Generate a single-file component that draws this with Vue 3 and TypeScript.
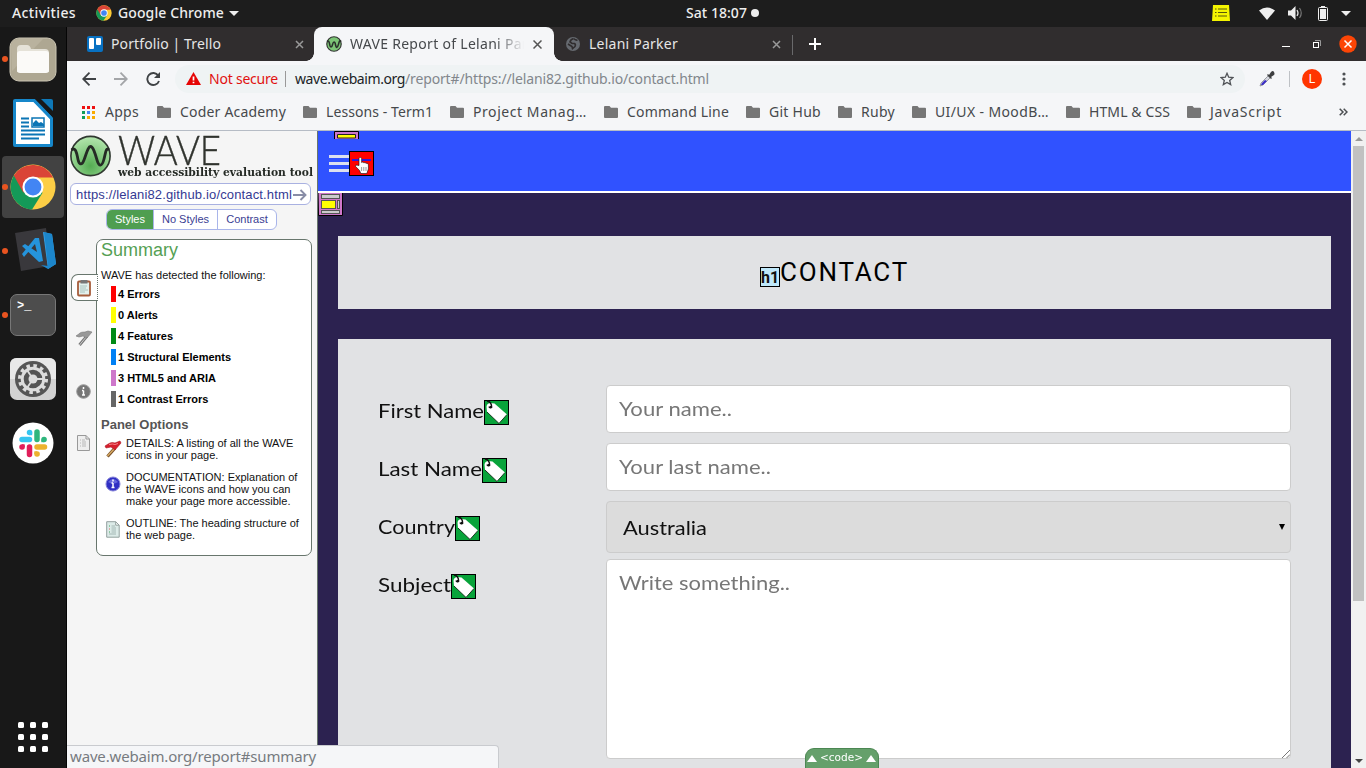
<script setup lang="ts">
import type { Directive } from 'vue'

interface Fit {
  w: number
  stretch?: boolean
}

// Gives a line of text an exact width, by letter spacing or by horizontal stretch.
const vFit: Directive<HTMLElement, number | Fit> = {
  mounted(el, binding) {
    const fit: Fit = typeof binding.value === 'number' ? { w: binding.value } : binding.value
    const natural = el.getBoundingClientRect().width
    const count = (el.textContent ?? '').length
    if (fit.stretch) {
      el.style.transformOrigin = 'left center'
      el.style.transform = `scaleX(${fit.w / natural})`
    } else {
      el.style.letterSpacing = `${(fit.w - natural) / count}px`
    }
    el.style.width = `${fit.w}px`
  },
}

const bookmarks = [
  { name: 'Coder Academy', w: 106 },
  { name: 'Lessons - Term1', w: 107 },
  { name: 'Project Manag…', w: 114 },
  { name: 'Command Line', w: 102 },
  { name: 'Git Hub', w: 52 },
  { name: 'Ruby', w: 34 },
  { name: 'UI/UX - MoodB…', w: 114 },
  { name: 'HTML & CSS', w: 81 },
  { name: 'JavaScript', w: 72 },
]

const counts = [
  { text: '4 Errors', kind: 'error' },
  { text: '0 Alerts', kind: 'alert' },
  { text: '4 Features', kind: 'feature' },
  { text: '1 Structural Elements', kind: 'structure' },
  { text: '3 HTML5 and ARIA', kind: 'aria' },
  { text: '1 Contrast Errors', kind: 'contrast' },
]

const fields = [
  { label: 'First Name', w: 106, type: 'text', value: 'Your name..', vw: 113 },
  { label: 'Last Name', w: 104, type: 'text', value: 'Your last name..', vw: 152 },
  { label: 'Country', w: 77, type: 'select', value: 'Australia', vw: 84 },
  { label: 'Subject', w: 73, type: 'area', value: 'Write something..', vw: 171 },
]
const appColors = ['#e11', '#e11', '#e11', '#0f9d58', '#4285f4', '#f9ab00', '#0f9d58', '#f9ab00', '#f9ab00']
</script>

<template>
  <div class="desktop">
    <header class="topbar">
      <span class="activities"><span v-fit="64" class="t">Activities</span></span>
      <svg class="chrome-small" width="16" height="16" viewBox="0 0 48 48">
        <circle cx="24" cy="24" r="23" fill="#fbc934" />
        <path d="M24 24L4 12.500A23 23 0 0 0 22 47L34 30z" fill="#149958" />
        <path d="M4 12.500A23 23 0 0 1 44.500 14H24L14 30z" fill="#da4437" />
        <circle cx="24" cy="24" r="11" fill="#fff" /><circle cx="24" cy="24" r="8.500" fill="#4285f4" />
      </svg>
      <span v-fit="106" class="t">Google Chrome</span>
      <i class="caret app-caret"></i>
      <span class="clock"><span v-fit="61" class="t">Sat 18:07</span><i class="dot"></i></span>
      <span class="tray">
        <svg class="note" width="18" height="16" viewBox="0 0 18 16">
          <path d="M1 0h16l1 16H0z" fill="#f4f400" />
          <path d="M3 4h1.500M3 7.500h1.500M3 11h1.500M6 4h9M6 7.500h9M6 11h9" stroke="#56560c" stroke-width="1.200" />
        </svg>
        <svg class="wifi" width="16" height="13" viewBox="0 0 16 13"><path d="M0 3.500Q8-2.500 16 3.500L8 13z" fill="#eee" /></svg>
        <svg class="vol" width="16" height="14" viewBox="0 0 16 14">
          <path d="M0 4.500h3L7.500 0v14L3 9.500H0z" fill="#eee" />
          <path d="M9 4q2 3 0 6" fill="none" stroke="#ddd" stroke-width="1.300" /><path d="M11.500 2q3.500 5 0 10" fill="none" stroke="#777" stroke-width="1.200" />
        </svg>
        <svg class="battery" width="10" height="15" viewBox="0 0 10 15">
          <path d="M3 0h4v2H3z" fill="#eee" /><rect x=".5" y="1.500" width="9" height="13" rx="1" fill="none" stroke="#eee" /><path d="M2 3h6v10H2z" fill="#eee" />
        </svg>
        <i class="caret"></i>
      </span>
    </header>

    <div class="body">
      <nav class="dock">
        <div class="slot running">
          <svg width="48" height="46" viewBox="0 0 48 46">
            <rect x="1" y="2" width="46" height="43" rx="9" fill="#aea792" stroke="#cbc5b3" />
            <path d="M3 35L34 3H10Q2 3 2 11z" fill="#b9b29e" />
            <path d="M8 36V13q0-4 4-4h6q3 0 4 4h14q4 0 4 4v19z" fill="#e5e2d8" />
            <rect x="8" y="15" width="32" height="22" rx="3" fill="#fbfaf8" />
          </svg>
        </div>
        <div class="slot">
          <svg width="40" height="48" viewBox="0 0 40 48">
            <path d="M2 0h20l18 17v29q0 2-2 2H2q-2 0-2-2V2q0-2 2-2z" fill="#1687ca" />
            <path d="M3 3h18l16 17v25H3z" fill="#fff" />
            <path d="M22 0h7l11 12v7z" fill="#181818" /><path d="M28 0h10q2 0 2 2v10z" fill="#0e78b7" />
            <path d="M21 1.500l17.500 18" stroke="#1687ca" stroke-width="3" />
            <path d="M8 19.500h8M8 23.500h8M8 27.500h8M8 31.500h24M8 35.500h24M8 39.500h18" stroke="#0b75b5" stroke-width="2" />
            <rect x="19" y="19" width="12" height="9" fill="#fff" stroke="#0b75b5" stroke-width="1.500" /><path d="M20 27v-3l3-3 3 3 2-1 3 2v2z" fill="#0b75b5" />
          </svg>
        </div>
        <div class="slot running focused">
          <svg width="46" height="46" viewBox="0 0 48 48">
            <circle cx="24" cy="24" r="23.500" fill="#fcce46" />
            <path d="M24 24L4 12A23.500 23.500 0 0 0 23 47.500L34 30z" fill="#149958" />
            <path d="M4 12A23.500 23.500 0 0 1 45 14H24L14 30z" fill="#da4437" />
            <circle cx="24" cy="24" r="11" fill="#fff" /><circle cx="24" cy="24" r="8.800" fill="#4285f4" />
          </svg>
        </div>
        <div class="slot running">
          <svg class="vscode" width="42" height="44" viewBox="0 0 42 44">
            <path d="M0 6L31 1l4 38-29 5z" fill="#39383c" />
            <path d="M28 5l9 2 4 30-8 5z" fill="#37a2e7" /><path d="M29 5l4 34-7-1 7 4 8-5-4-30z" fill="#1c86cb" />
            <path d="M24 11l4 23-4 1L7 19l3-2 12 8-2-8-11 13-2-3L20 11z" fill="#2594dc" />
          </svg>
        </div>
        <div class="slot running">
          <div class="terminal">&gt;_</div>
        </div>
        <div class="slot">
          <svg width="48" height="44" viewBox="0 0 48 44">
            <rect x="1" y="1" width="46" height="42" rx="7" fill="#d2d2d2" /><path d="M1 22V8q0-7 7-7h32q7 0 7 7v14z" fill="#e8e8e8" />
            <circle cx="24" cy="22" r="18" fill="#555" /><circle cx="24" cy="22" r="13.300" fill="none" stroke="#ddd" stroke-width="3.500" stroke-dasharray="3.500 3.460" />
            <circle cx="24" cy="22" r="10.800" fill="none" stroke="#ddd" stroke-width="3" /><path d="M24 22h11M24 22l-6-9M24 22l-6 9" stroke="#ddd" stroke-width="1.800" /><circle cx="24" cy="22" r="4.500" fill="#ddd" />
          </svg>
        </div>
        <div class="slot">
          <svg width="42" height="42" viewBox="0 0 42 42">
            <circle cx="21" cy="21" r="20.500" fill="#fff" />
            <g stroke-width="5.500" stroke-linecap="round">
              <path d="M10 17.500h7.500M17.500 10.500h.1" stroke="#36c5f0" /><path d="M25 10v7.500M32 17.500h.1" stroke="#2eb67d" />
              <path d="M25 25h7.500M25 32h.1" stroke="#ecb22e" /><path d="M17.500 25v7.500M10 25h.1" stroke="#e01e5a" />
            </g>
            <path d="M17.500 10.500h2.700v2.700h-2.700z" fill="#36c5f0" /><path d="M29.300 17.500h2.700v2.700h-2.700z" fill="#2eb67d" /><path d="M22.300 29.300H25V32h-2.700z" fill="#ecb22e" /><path d="M10 22.300h2.700V25H10z" fill="#e01e5a" />
          </svg>
        </div>
        <div class="launcher"><i v-for="n in 9" :key="n"></i></div>
      </nav>

      <main class="browser">
        <div class="tabs">
          <div class="tab tab-one">
            <svg width="16" height="16" viewBox="0 0 16 16"><rect width="16" height="16" rx="2" fill="#0871c2" /><rect x="2" y="2" width="5" height="11" rx="1" fill="#fff" /><rect x="9" y="2" width="5" height="7" rx="1" fill="#fff" /></svg>
            <span class="tab-title"><span v-fit="110" class="t">Portfolio | Trello</span></span>
            <svg class="close" width="9" height="9" viewBox="0 0 9 9"><path d="M1 1l7 7M8 1L1 8" /></svg>
          </div>
          <div class="tab active">
            <svg width="16" height="16" viewBox="0 0 42 42"><circle cx="21" cy="21" r="19" fill="#7cc576" stroke="#313431" stroke-width="3" /><path d="M3 14c5-3 6 4 7 10s5 8 7-1 6-10 8 0 5 9 8-2 3-9 7-7" fill="none" stroke="#29302a" stroke-width="4" /></svg>
            <span class="tab-title faded"><span v-fit="200" class="t">WAVE Report of Lelani Parker</span></span>
            <svg class="close" width="9" height="9" viewBox="0 0 9 9"><path d="M.5 .5l8 8M8.500 .5l-8 8" /></svg>
          </div>
          <div class="tab tab-three">
            <svg width="16" height="16" viewBox="0 0 16 16"><circle cx="8" cy="8" r="7" fill="#666a70" /><path d="M8.500 2.500q-3 1-3.500 3.500l2 1.500h2.500q1.500 1 .5 3L7.500 12.500 7 10.500 3 8M9 2.500q1 2 3.500 1.500" fill="none" stroke="#302d2e" stroke-width="1.600" /></svg>
            <span class="tab-title"><span v-fit="89" class="t">Lelani Parker</span></span>
            <svg class="close" width="9" height="9" viewBox="0 0 9 9"><path d="M1 1l7 7M8 1L1 8" /></svg>
          </div>
          <svg class="plus" width="12" height="12" viewBox="0 0 12 12"><path d="M6 0v12M0 6h12" stroke="#fff" stroke-width="2" /></svg>
          <span class="window-buttons">
            <svg width="8" height="8" viewBox="0 0 8 8"><path d="M0 6.500h8" stroke="#fff" /></svg>
            <svg width="8" height="8" viewBox="0 0 8 8"><path d="M2 .5h5.500V6" fill="none" stroke="#999" /><rect x=".5" y="2.500" width="5" height="5" fill="none" stroke="#fff" /></svg>
            <svg width="18" height="18" viewBox="0 0 18 18"><circle cx="9" cy="9" r="8.700" fill="#fc4506" /><path d="M5.500 5.500l7 7M12.500 5.500l-7 7" stroke="#fff" stroke-width="1.500" /></svg>
          </span>
        </div>

        <div class="toolbar">
          <svg width="14" height="14" viewBox="0 0 14 14"><path d="M14 7H1M7.500 .7L1.200 7l6.300 6.300" fill="none" stroke="#3f4245" stroke-width="1.800" /></svg>
          <svg width="14" height="14" viewBox="0 0 14 14"><path d="M0 7h13M6.500 .7L12.800 7l-6.300 6.300" fill="none" stroke="#a3a5a8" stroke-width="1.800" /></svg>
          <svg width="15" height="14" viewBox="0 0 15 14"><path d="M12.300 3.600A6 6 0 1 0 13 9" fill="none" stroke="#3f4245" stroke-width="1.900" /><path d="M14 0v6H8z" fill="#3f4245" /></svg>
          <div class="omnibox">
            <svg width="15" height="13" viewBox="0 0 15 13"><path d="M7.500 0L15 13H0z" fill="#e60505" /><path d="M7.500 4.500v4M7.500 9.800v1.500" stroke="#fff" stroke-width="1.700" /></svg>
            <span class="insecure"><span v-fit="69" class="t">Not secure</span></span>
            <i class="bar"></i>
            <span v-fit="110" class="t host">wave.webaim.org</span><span v-fit="304" class="t path">/report#/https://lelani82.github.io/contact.html</span>
            <svg class="star" width="14" height="14" viewBox="0 0 14 14"><path d="M7 1.300l1.700 3.900 4.200.4-3.200 2.800 1 4.200L7 10.400l-3.700 2.200 1-4.200L1.100 5.600l4.200-.4z" fill="none" stroke="#505357" stroke-width="1.300" /></svg>
          </div>
          <svg class="dropper" width="16" height="16" viewBox="0 0 16 16">
            <path d="M1 15l1-3 7-7 2 2-7 7z" fill="#d5d6df" stroke="#888b91" stroke-width=".8" /><path d="M2 14l1-2 3-3 2 1-4 4z" fill="#3c2ec8" /><path d="M8 4l1-1 1 1 2-3q2-2 3 0t0 3l-3 2 1 1-1 1z" fill="#3d3e40" />
          </svg>
          <i class="bar tool-bar"></i>
          <span class="avatar">L</span>
          <svg class="menu" width="4" height="14" viewBox="0 0 4 14"><circle cx="2" cy="2" r="1.600" /><circle cx="2" cy="7" r="1.600" /><circle cx="2" cy="12" r="1.600" /></svg>
        </div>

        <div class="bookmarks">
          <svg width="13" height="13" viewBox="0 0 13 13">
            <rect v-for="(c, n) in appColors" :key="n" :x="(n % 3) * 5" :y="Math.floor(n / 3) * 5" width="3" height="3" :fill="c" />
          </svg>
          <span class="apps"><span v-fit="34" class="t">Apps</span></span>
          <span v-for="b in bookmarks" :key="b.name" class="bookmark">
            <svg width="14" height="12" viewBox="0 0 14 12"><path d="M1 0h4.500L7 1.700h6q1 0 1 1V11q0 1-1 1H1q-1 0-1-1V1q0-1 1-1z" fill="#767676" /></svg>
            <span v-fit="b.w" class="t">{{ b.name }}</span>
          </span>
          <svg class="more" width="9" height="8" viewBox="0 0 9 8"><path d="M.7 .7L4 4 .7 7.300M4.700 .7L8 4 4.700 7.300" fill="none" stroke="#4b4e51" stroke-width="1.500" /></svg>
        </div>

        <div class="viewport">
          <aside class="wave">
            <div class="logo">
              <svg width="41" height="42" viewBox="0 0 41 42">
                <defs><radialGradient id="orb" cx=".5" cy=".75" r=".75"><stop offset="0" stop-color="#55ac53" /><stop offset=".45" stop-color="#82c97e" /><stop offset="1" stop-color="#b4e6ae" /></radialGradient></defs>
                <circle cx="20.500" cy="21" r="19.600" fill="url(#orb)" stroke="#303830" stroke-width="1.600" />
                <path d="M1.500 15C6 11 7 20 8 24.500S11.500 31.500 14 25 18 11.500 20.500 11.500 25 18 27 25s5 7 7-1S36 12.500 39 15" fill="none" stroke="#252b25" stroke-width="2.800" />
              </svg>
              <div class="brand">
                <div class="brand-name"><span v-fit="{ w: 103, stretch: true }" class="t">WAVE</span></div>
                <div class="tagline"><span v-fit="{ w: 195, stretch: true }" class="t">web accessibility evaluation tool</span></div>
              </div>
            </div>
            <div class="address">
              <span v-fit="216" class="t">https://lelani82.github.io/contact.html</span>
              <svg width="14" height="12" viewBox="0 0 14 12"><path d="M0 6h12M7.500 1l5 5-5 5" fill="none" stroke="#888da6" stroke-width="1.900" /></svg>
            </div>
            <div class="modes"><span class="on">Styles</span><span>No Styles</span><span>Contrast</span></div>
            <div class="report">
              <div class="side-tabs">
                <div class="side-tab current">
                  <svg width="16" height="18" viewBox="0 0 16 18"><rect x="2" y="2.500" width="12" height="14" rx="1" fill="#e3f1ed" stroke="#a65d3b" stroke-width="1.800" /><rect x="4.500" y="1" width="7" height="3.500" fill="#777" /><path d="M4 7h7M4 9h6M4 11h8M4 13h5" stroke="#9cbab3" stroke-width=".8" /></svg>
                </div>
                <div class="side-tab flag-tab">
                  <svg width="18" height="16" viewBox="0 0 18 16"><path d="M4.500 15L12 6" stroke="#777" stroke-width="3" /><path d="M4.500 15L12 6" stroke="#ccc" stroke-width="1" /><path d="M1 6q3-2 4-3t5-1l3-1 4 1-5 6-4-2-4 1z" fill="#999" stroke="#777" stroke-width=".6" /></svg>
                </div>
                <div class="side-tab info-tab">
                  <svg width="15" height="15" viewBox="0 0 15 15"><circle cx="7.500" cy="7.500" r="6.800" fill="#777" stroke="#999" /><path d="M7.500 3v2M7.500 6.500v5M6 6.500h1.500M6 11h3" stroke="#fff" stroke-width="1.500" /></svg>
                </div>
                <div class="side-tab page-tab">
                  <svg width="13" height="16" viewBox="0 0 13 16"><path d="M.5 .5H9L12.500 4v11.500H.5zM9 .5V4h3.500" fill="#eee" stroke="#999" /><path d="M3 5h1M3 8h1M3 11h1M5 5h3M5 7h4M5 9h4M5 11h4" stroke="#aaa" stroke-width=".8" /></svg>
                </div>
              </div>
              <section class="summary">
                <h2>Summary</h2>
                <p class="intro">WAVE has detected the following:</p>
                <ul><li v-for="c in counts" :key="c.text" :class="c.kind">{{ c.text }}</li></ul>
                <h3>Panel Options</h3>
                <div class="option">
                  <svg width="18" height="18" viewBox="0 0 18 18"><path d="M3.500 16.500L11 8" stroke="#7a5129" stroke-width="3.200" /><path d="M3.500 16L11 8" stroke="#d9ad65" stroke-width="1.300" /><path d="M1 6q3-2 5-3t5 0l5-2 1 2-6 7-4-3-5 1z" fill="#d61f2d" stroke="#ab1723" stroke-width=".6" /><path d="M5 4.500q4-1 6 0l3-1" fill="none" stroke="#f78388" /></svg>
                  <p>DETAILS: A listing of all the WAVE<br />icons in your page.</p>
                </div>
                <div class="option">
                  <svg width="16" height="16" viewBox="0 0 16 16"><circle cx="8" cy="8" r="7" fill="#302fc3" stroke="#8582d8" /><path d="M3 6q5-6 10 0-5 3-10 0z" fill="#6667dc" /><path d="M8 3.500v2M8 7v5M6.500 7H8M6.500 11.500h3" stroke="#fff" stroke-width="1.500" /></svg>
                  <p>DOCUMENTATION: Explanation of<br />the WAVE icons and how you can<br />make your page more accessible.</p>
                </div>
                <div class="option">
                  <svg width="14" height="17" viewBox="0 0 14 17"><path d="M.7 .7h9l3.500 3.500v12H.7zM9.700 .7v3.500h3.500" fill="#dcebe8" stroke="#93a19f" /><path d="M3 5h1M3 11h1" stroke="#45a65f" /><path d="M3 8h1" stroke="#d66" /><path d="M5.500 5H9M5.500 7H10M5.500 9H10M5.500 11H10M3 13h7" stroke="#94aaa7" stroke-width=".8" /></svg>
                  <p>OUTLINE: The heading structure of<br />the web page.</p>
                </div>
              </section>
            </div>
          </aside>

          <article class="page">
            <div class="banner">
              <div class="burger"><i></i><i></i><i></i></div>
              <svg class="error-icon" width="25" height="25" viewBox="0 0 25 25">
                <rect x=".5" y=".5" width="24" height="24" fill="#f00" stroke="#000" /><path d="M3 9h19" stroke="#2b17da" stroke-width="2" />
                <path d="M10 14.500V7.500q1.300-3 2.600 0v4q1.400-1.200 2.200.3 1.400-.8 2.200.5 2-.5 2.400 1.400v4.300l-1.600 4.500h-6l-1.200-3-4-4q-.4-2.400 2-1.200z" fill="#fff" stroke="#111" stroke-width=".6" /><path d="M12.600 16v4M14.800 16v4M17 16v4" stroke="#555" stroke-width=".6" />
              </svg>
              <svg class="nav-icon" width="25" height="8" viewBox="0 0 25 8"><path d="M.5 8V.5h24V8" fill="#ce77ca" stroke="#000" /><path d="M3.500 7V3.500h18V7z" fill="#ff0" stroke="#222" /></svg>
            </div>
            <div class="content">
              <svg class="main-icon" width="25" height="23" viewBox="0 0 25 23"><path d="M0-2h24.500v24.500H.5z" fill="#ce77ca" stroke="#000" /><rect x="3.500" y="1.500" width="18" height="4" fill="#ccc" stroke="#555" /><rect x="3.500" y="7.500" width="14" height="8" fill="#ff0" stroke="#555" /><rect x="19.500" y="7.500" width="2" height="8" fill="#ccc" stroke="#555" /><rect x="3.500" y="17.500" width="18" height="3" fill="#ccc" stroke="#555" /></svg>
              <div class="card title"><span class="h1-icon">h1</span><span v-fit="129" class="t contact">CONTACT</span></div>
              <form class="card form">
                <div v-for="f in fields" :key="f.label" class="row">
                  <label>
                    <span v-fit="{ w: f.w, stretch: true }" class="t">{{ f.label }}</span>
                    <svg class="tag" width="25" height="25" viewBox="0 0 25 25">
                      <rect x=".5" y=".5" width="24" height="24" fill="#08a33a" stroke="#000" /><path d="M2.500 7q0-3 3-4l5 .5L23 14.500l-8 9L3 12z" fill="#fff" /><path d="M23 14.500l-8 9L3 12" fill="none" stroke="#183920" stroke-width="1" /><circle cx="7" cy="7" r="1.300" fill="#111" /><path d="M3 1q5 1 4.500 6.500-2 1-2.500-1" fill="none" stroke="#111" stroke-width="1.300" />
                    </svg>
                  </label>
                  <div class="field" :class="f.type">
                    <span v-fit="{ w: f.vw, stretch: true }" class="t">{{ f.value }}</span>
                    <i v-if="f.type === 'select'" class="arrow"></i>
                    <svg v-if="f.type === 'area'" class="grip" width="8" height="8" viewBox="0 0 8 8"><path d="M0 8l8-8M4.500 8L8 4.500" stroke="#777" /></svg>
                  </div>
                </div>
              </form>
            </div>
            <div class="code"><i></i><span v-fit="{ w: 43, stretch: true }" class="t">&lt;code&gt;</span><i></i></div>
          </article>

          <div class="scrollbar"><i class="up"></i><div class="thumb"></div><i class="down"></i></div>
          <div class="status"><span v-fit="246" class="t">wave.webaim.org/report#summary</span></div>
        </div>
      </main>
    </div>
  </div>
</template>

<style>
html, body { margin: 0; overflow: hidden; }
</style>

<style scoped>
* { box-sizing: border-box; }
svg { display: block; flex: none; }
.t { display: inline-block; white-space: nowrap; flex: none; }
.desktop { width: 1366px; height: 768px; overflow: hidden; font: 14px/20px "Noto Sans", "Open Sans", sans-serif; color: #46494c; }
.topbar { height: 27px; background: #1d1d1d; color: #eee; display: flex; align-items: center; font-weight: 500; padding: 0 0 1px 12px; }
.activities { width: 84px; }
.chrome-small { margin-right: 6px; }
.caret { border: 5px solid transparent; border-top-color: #eee; border-bottom: 0; }
.app-caret { margin-left: 5px; }
.clock { display: flex; align-items: center; margin-left: 447px; gap: 4px; }
.dot { width: 8px; height: 8px; border-radius: 50%; background: #eee; }
.tray { display: flex; align-items: center; margin-left: auto; padding-right: 15px; }
.note { margin-right: 29px; }
.wifi { margin-right: 13px; }
.vol { margin-right: 14px; }
.battery { margin-right: 13px; }
.body { display: flex; height: 741px; }
.dock { width: 67px; background: #181818; border-right: 1px solid #050505; display: flex; flex-direction: column; gap: 2px; padding: 1px 2px 0; }
.slot { height: 62px; width: 62px; display: flex; align-items: center; justify-content: center; position: relative; border-radius: 4px; flex: none; }
.vscode { margin: -4px 0 0 5px; }
.focused { background: #424242; }
.running::before { content: ""; position: absolute; left: 0; top: 28px; width: 6px; height: 6px; border-radius: 50%; background: #e95420; }
.terminal { width: 46px; height: 42px; border-radius: 7px; background: #4d4d4d; border: 1px solid #777; color: #fff; font: bold 12px/22px "Liberation Mono", monospace; padding-left: 6px; }
.launcher { margin: auto 0 16px 16px; display: grid; grid-template-columns: repeat(3, 6px); gap: 6px; }
.launcher i { height: 6px; border-radius: 1.500px; background: #fff; }
.browser { width: 1299px; }
.tabs { height: 34px; background: #302d2e; display: flex; align-items: center; color: #e6e6e6; }
.tab { height: 34px; display: flex; align-items: center; flex: none; }
.tab svg { margin-right: 8px; }
.tab .close { margin: 0; fill: none; stroke: #999; stroke-width: 1.500; }
.tab-title { flex: 1; overflow: hidden; height: 22px; padding-top: 1px; }
.tab-one { width: 247px; padding: 0 10px 0 20px; }
.active { width: 240px; background: #f5f6f8; color: #46494c; padding: 0 12px; border-radius: 8px 8px 0 0; position: relative; }
.active::before, .active::after { content: ""; position: absolute; bottom: 0; width: 8px; height: 8px; }
.active::before { left: -8px; background: radial-gradient(circle at 0 0, transparent 7.500px, #f5f6f8 8px); }
.active::after { right: -8px; background: radial-gradient(circle at 100% 0, transparent 7.500px, #f5f6f8 8px); }
.active .close { stroke: #555; }
.faded { flex: none; width: 174px; margin-right: 9px; mask-image: linear-gradient(90deg, #000 145px, transparent 174px); }
.tab-three { width: 239px; padding: 0 12px 0 11px; position: relative; }
.tab-three::after { content: ""; position: absolute; right: 0; top: 8px; width: 1px; height: 20px; background: #69696b; }
.plus { margin-left: 16px; }
.window-buttons { display: flex; align-items: center; gap: 23px; margin-left: auto; padding-right: 9px; }
.window-buttons svg:last-child { margin-left: -5px; }
.toolbar { height: 35px; background: #f5f6f8; display: flex; align-items: center; padding-left: 15px; }
.toolbar > svg:nth-child(-n+2) { margin-right: 18px; }
.omnibox { margin-left: 14px; width: 1070px; height: 28px; border-radius: 14px; background: #eff3f4; display: flex; align-items: center; padding: 0 11px; }
.insecure { color: #e11111; margin: 0 7px 0 8px; }
.bar { width: 1px; height: 16px; background: #999; margin-right: 9px; }
.host { color: #202326; }
.path { color: #82878c; }
.star { margin-left: auto; }
.dropper { margin-left: 14px; }
.tool-bar { background: #bec1c5; margin: 0 12px 0 14px; }
.avatar { width: 20px; height: 20px; border-radius: 50%; background: #ff3500; color: #fff; font: 12px/20px Roboto, sans-serif; text-align: center; }
.menu { margin-left: 20px; fill: #4d5053; }
.bookmarks { height: 34px; background: #f5f6f8; display: flex; align-items: center; padding: 0 18px 2px 15px; }
.apps { margin: 0 18px 0 10px; }
.bookmark { display: flex; align-items: center; gap: 9px; margin-right: 17px; }
.more { margin-left: auto; }
.viewport { height: 638px; border-top: 1px solid #b6bcc5; display: flex; position: relative; overflow: hidden; }
.wave { width: 251px; background: #f5f5f5; border-right: 1px solid #68766d; padding-left: 3px; font: 11px/12px "Liberation Sans", Arial, sans-serif; color: #111; }
.logo { display: flex; gap: 7px; padding-top: 4px; height: 52px; }
.brand-name { height: 31px; font: 400 41px/30px Lato, sans-serif; font-weight: 300; color: #30332e; -webkit-text-stroke: .4px #30332e; }
.tagline { height: 14px; font: bold 10.500px/13px "DejaVu Serif", serif; color: #252a25; }
.address { width: 241px; height: 22px; border: 1px solid #a9b1e1; border-radius: 6px; background: #fff; display: flex; align-items: center; padding: 1px 0 0 5px; gap: 1px; font-size: 13px; color: #353a93; }
.modes { margin: 4px 0 0 36px; width: 171px; height: 21px; border: 1px solid #a9b5ea; border-radius: 6px; background: #fff; display: grid; grid-template-columns: 46px 64px 59px; overflow: hidden; line-height: 19px; color: #3a4093; text-align: center; }
.modes span + span { border-left: 1px solid #a9b5ea; }
.modes .on { background: #4f9e50; color: #fff; }
.report { margin-top: 9px; display: flex; }
.side-tabs { width: 26px; padding: 35px 0 0 1px; }
.side-tab { width: 25px; height: 27px; display: flex; align-items: center; justify-content: center; }
.current { width: 27px; background: #fff; border: 1px solid #68766d; border-right: 1px dotted #68766d; border-radius: 7px 0 0 7px; position: relative; z-index: 1; padding-right: 2px; }
.flag-tab { margin-top: 23px; }
.info-tab { margin-top: 27px; }
.page-tab { margin-top: 24px; }
.summary { width: 216px; height: 317px; border: 1px solid #68766d; border-radius: 7px; background: #fff; padding-left: 4px; }
h2 { margin: 0; font: 18px/21px "Liberation Sans", sans-serif; color: #559f54; }
.intro { margin: 8px 0 5px; white-space: nowrap; }
ul { list-style: none; margin: 0; padding: 0 0 0 10px; }
li { height: 16px; margin-bottom: 5px; border-left: 5px solid; padding-left: 2px; font-weight: bold; line-height: 16px; color: #000; }
.error { border-left-color: #f00; }
.alert { border-left-color: #ff0; }
.feature { border-left-color: #008a16; }
.structure { border-left-color: #0080f4; }
.aria { border-left-color: #ce77ca; }
.contrast { border-left-color: #666; }
h3 { margin: 10px 0 4px; font: bold 13px/16px "Liberation Sans", sans-serif; color: #555; }
.option { display: grid; grid-template-columns: 23px 1fr; column-gap: 2px; align-items: center; margin-bottom: 10px; white-space: nowrap; }
.option svg { justify-self: center; }
.option:nth-of-type(2) svg { margin-top: -10px; }
.option p { margin: 0; }
.page { width: 1033px; position: relative; background: #2c2250; }
.banner { height: 62px; border-bottom: 2px solid #fff; background: #3052ff; display: flex; padding: 20px 0 0 11px; position: relative; }
.burger { width: 20px; padding-top: 4px; display: grid; gap: 4px; align-content: start; }
.burger i { height: 3px; background: #dce0ef; }
.nav-icon { position: absolute; left: 16px; top: 0; }
.content { padding: 43px 20px 0; position: relative; }
.main-icon { position: absolute; left: 0; top: 0; }
.card { background: #e1e2e4; }
.title { height: 73px; display: flex; justify-content: center; padding-top: 20px; color: #000; font: 26px/32px Roboto, sans-serif; }
.h1-icon { width: 20px; height: 20px; border: 1px solid #000; background: #bfe8fa; font: bold 16px/19px Roboto, sans-serif; text-align: center; margin-top: 11px; color: #111; }
.form { margin-top: 30px; height: 450px; padding: 46px 40px 0; font: 20px/24px Lato, "Open Sans", sans-serif; color: #111; }
.row { display: grid; grid-template-columns: 228px 685px; height: 58px; align-items: start; }
label { display: flex; padding-top: 13px; }
.tag { margin-top: 2px; }
.field { border: 1px solid #ccc; border-radius: 4px; background: #fff; color: #777; padding: 11px 12px; height: 48px; line-height: 22px; position: relative; }
.select { height: 52px; padding: 14px 16px; background: #dcdcdc; color: #111; }
.area { height: 200px; }
.arrow { position: absolute; right: 5px; top: 22px; border: 3px solid transparent; border-top: 6px solid #000; border-bottom: 0; }
.grip { position: absolute; right: 0; bottom: 0; }
.code { position: absolute; left: 487px; bottom: 0; width: 74px; height: 20px; border: 1px solid #4c8753; border-bottom: 0; border-radius: 9px 9px 0 0; background: #65a06b; color: #fff; display: flex; align-items: center; justify-content: center; gap: 3px; padding: 0 2px 1px 0; font: 10px/18px "DejaVu Sans", sans-serif; }
.code i { border: 5px solid transparent; border-bottom: 7px solid #fff; border-top: 0; }
.scrollbar { width: 15px; background: #f1f1f1; display: flex; flex-direction: column; align-items: center; }
.up, .down { border: 4px solid transparent; }
.up { border-bottom-color: #999; border-top: 0; margin: 6px 0 5px; }
.thumb { width: 11px; height: 455px; background: #c1c1c1; }
.down { border-top-color: #444; border-bottom: 0; margin: auto 0 5px; }
.status { position: absolute; left: 0; bottom: 0; width: 432px; height: 23px; background: #f5f6f8; border: solid #c9cbcf; border-width: 1px 1px 0 0; border-radius: 0 4px 0 0; padding-left: 3px; line-height: 20px; color: #777b80; font-size: 15px; }
</style>
